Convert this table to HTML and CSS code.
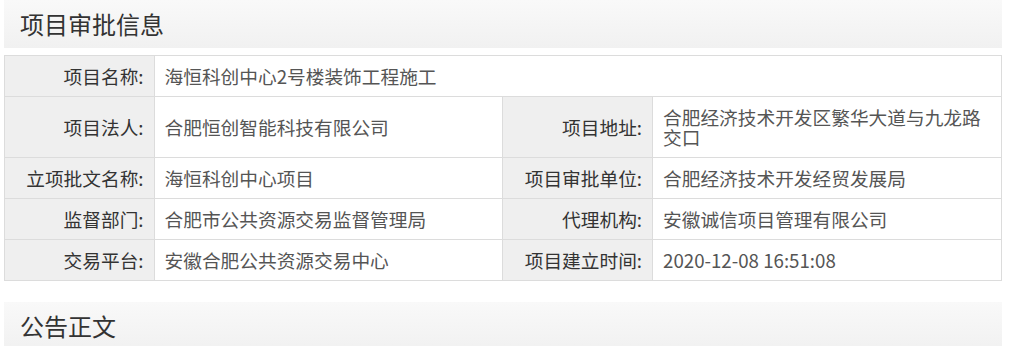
FILE: index.html
```html
<!DOCTYPE html>
<html lang="zh">
<head>
<meta charset="utf-8">
<title>项目审批信息</title>
<link rel="stylesheet" href="styles.css">
</head>
<body>
<div class="page">
  <div class="section-head"><h3 class="section-title">项目审批信息</h3></div>
  <table class="info">
    <colgroup>
      <col class="c-label"><col class="c-value"><col class="c-label"><col class="c-value">
    </colgroup>
    <tr>
      <th class="label">项目名称:</th>
      <td class="value" colspan="3">海恒科创中心2号楼装饰工程施工</td>
    </tr>
    <tr>
      <th class="label">项目法人:</th>
      <td class="value">合肥恒创智能科技有限公司</td>
      <th class="label">项目地址:</th>
      <td class="value">合肥经济技术开发区繁华大道与九龙路交口</td>
    </tr>
    <tr>
      <th class="label">立项批文名称:</th>
      <td class="value">海恒科创中心项目</td>
      <th class="label">项目审批单位:</th>
      <td class="value">合肥经济技术开发经贸发展局</td>
    </tr>
    <tr>
      <th class="label">监督部门:</th>
      <td class="value">合肥市公共资源交易监督管理局</td>
      <th class="label">代理机构:</th>
      <td class="value">安徽诚信项目管理有限公司</td>
    </tr>
    <tr>
      <th class="label">交易平台:</th>
      <td class="value">安徽合肥公共资源交易中心</td>
      <th class="label">项目建立时间:</th>
      <td class="value">2020-12-08 16:51:08</td>
    </tr>
  </table>
  <div class="section-head second"><h3 class="section-title">公告正文</h3></div>
</div>
</body>
</html>
```

FILE: styles.css
```css
html, body {
  margin: 0;
  padding: 0;
  background: #fff;
}
body {
  font-family: "Noto Sans CJK SC", "Noto Sans", sans-serif;
  color: #333;
}
.page {
  width: 998px;
  margin-left: 4px;
}
.section-head {
  height: 48px;
  display: flex;
  align-items: center;
  padding-left: 16px;
  background: linear-gradient(#f9f9f9, #f1f1f1);
}
.section-head.second {
  margin-top: 21px;
}
.section-title {
  margin: 0;
  font-size: 24px;
  font-weight: normal;
  line-height: 30px;
  color: #333;
}
.info {
  width: 998px;
  margin-top: 7px;
  border-collapse: collapse;
  table-layout: fixed;
  font-size: 18.7px;
  line-height: 20px;
}
.c-label { width: 15%; }
.c-value { width: 35%; }
.info th, .info td {
  border: 1px solid #dcdcdc;
  padding: 10px 10px;
  vertical-align: middle;
}
.label {
  background: #efefef;
  text-align: right;
  font-weight: normal;
  color: #333;
  white-space: nowrap;
}
.value {
  text-align: left;
  color: #555;
}
```
